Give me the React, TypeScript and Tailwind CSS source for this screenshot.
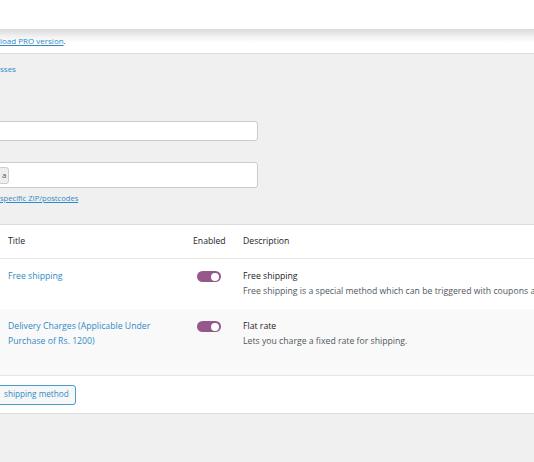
import React from 'react';

const Toggle: React.FC = () => (
  <span className="relative inline-block w-[24px] h-[11px] rounded-full bg-[#96588a]">
    <span className="absolute right-[2px] top-[1.5px] w-[8px] h-[8px] rounded-full bg-white" />
  </span>
);

const rows = [
  {
    title: ['Free shipping'],
    method: 'Free shipping',
    desc: 'Free shipping is a special method which can be triggered with coupons and minimum spends.',
    bg: 'bg-white',
    h: 'h-[50px]',
  },
  {
    title: ['Delivery Charges (Applicable Under', 'Purchase of Rs. 1200)'],
    method: 'Flat rate',
    desc: 'Lets you charge a fixed rate for shipping.',
    bg: 'bg-[#f9f9f9]',
    h: 'h-[66px]',
  },
];

export default function App() {
  return (
    <div className="w-[534px] h-[462px] overflow-hidden bg-[#f0f0f1] text-[8.7px] text-[#3c434a] font-['Open_Sans','Noto_Sans',sans-serif]">
      <div className="h-[29px] bg-white" />
      <div className="h-[25px] bg-[linear-gradient(to_bottom,#d9d9db,#f4f4f5_35%,#fff_60%)] border-b border-[#dcdcde] flex items-center text-[8px]">
        <span className="text-[#2e8ac7] underline whitespace-nowrap">load PRO version</span>
        <span>.</span>
      </div>

      <div className="pt-[8px] h-[28px] text-[8px]">
        <span className="text-[#2e8ac7] leading-[13px]">sses</span>
      </div>

      <div className="pt-[39px]">
        <div className="-ml-[4px] w-[262px] h-[20px] bg-white border border-[#c8ccd0] rounded-[3px]" />
      </div>

      <div className="pt-[21px]">
        <div className="-ml-[4px] w-[262px] h-[26px] bg-white border border-[#c8ccd0] rounded-[3px] flex items-center">
          <span className="ml-[1px] h-[17px] pl-[3px] pr-[2px] flex items-center bg-[#eeeeee] border border-[#cccccc] rounded-[3px] text-[#50575e] text-[8px]">
            a
          </span>
        </div>
      </div>

      <div className="pt-[5px] h-[36px] text-[7.6px]">
        <span className="text-[#2e8ac7] underline whitespace-nowrap">specific ZIP/postcodes</span>
      </div>

      <div className="bg-white border-y border-[#dcdcde]">
        <div className="grid grid-cols-[185px_50px_1fr] pl-[8px] h-[34px] items-center border-b border-[#e5e5e5] text-[#1d2327]">
          <span>Title</span>
          <span>Enabled</span>
          <span>Description</span>
        </div>
        {rows.map((r) => (
          <div key={r.method} className={`grid grid-cols-[185px_50px_1fr] pl-[8px] ${r.h} ${r.bg} pt-[10px]`}>
            <div className="text-[#2e8ac7] leading-[15px]">
              {r.title.map((t) => (
                <div key={t} className="whitespace-nowrap">{t}</div>
              ))}
            </div>
            <div className="pl-[4px] pt-[2px]">
              <Toggle />
            </div>
            <div className="leading-[15px] whitespace-nowrap">
              <div className="font-medium text-[#1d2327]">{r.method}</div>
              <div className="text-[#50575e]">{r.desc}</div>
            </div>
          </div>
        ))}
        <div className="h-[38px] border-t border-[#e5e5e5] flex items-center">
          <span className="-ml-[4px] h-[20px] pl-[7px] pr-[6px] flex items-center border border-[#4a9cd0] rounded-[3px] bg-[#f6f7f7] text-[#2e8ac7] whitespace-nowrap text-[8.2px]">
            shipping method
          </span>
        </div>
      </div>
    </div>
  );
}
